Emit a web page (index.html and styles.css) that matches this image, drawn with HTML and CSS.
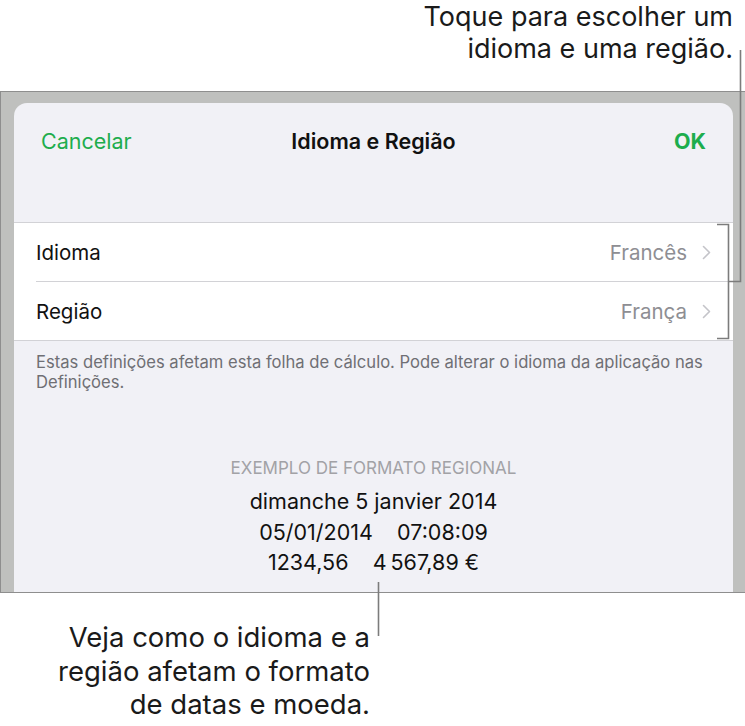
FILE: index.html
```html
<!DOCTYPE html>
<html lang="pt">
<head>
    <meta charset="UTF-8">
    <meta name="viewport" content="width=device-width, initial-scale=1.0">
    <title>Idioma e Região</title>
    <link rel="stylesheet" href="styles.css">
</head>
<body>
    <div class="page">
        <div class="note note-top">Toque para escolher um<br>idioma e uma região.</div>

        <div class="frame">
            <div class="sheet">
                <div class="nav">
                    <span class="nav-btn">Cancelar</span>
                    <span class="nav-title">Idioma e Região</span>
                    <span class="nav-btn nav-done">OK</span>
                </div>

                <div class="group">
                    <div class="row">
                        <span class="row-label">Idioma</span>
                        <span class="row-value">Francês</span>
                        <span class="chevron">
                            <svg width="9" height="15" viewBox="0 0 9 15"><path d="M1.5 1.5 L7.5 7.5 L1.5 13.5" fill="none" stroke="#c4c4c9" stroke-width="1.6" stroke-linecap="round" stroke-linejoin="round"/></svg>
                        </span>
                    </div>
                    <div class="row">
                        <span class="row-label">Região</span>
                        <span class="row-value">França</span>
                        <span class="chevron">
                            <svg width="9" height="15" viewBox="0 0 9 15"><path d="M1.5 1.5 L7.5 7.5 L1.5 13.5" fill="none" stroke="#c4c4c9" stroke-width="1.6" stroke-linecap="round" stroke-linejoin="round"/></svg>
                        </span>
                    </div>
                </div>

                <p class="footnote">Estas definições afetam esta folha de cálculo. Pode alterar o idioma da aplicação nas Definições.</p>

                <div class="sample">
                    <div class="sample-title">EXEMPLO DE FORMATO REGIONAL</div>
                    <div class="sample-line">dimanche 5 janvier 2014</div>
                    <div class="sample-line">05/01/2014&nbsp;&nbsp;&nbsp;&nbsp;07:08:09</div>
                    <div class="sample-line">1234,56&nbsp;&nbsp;&nbsp;&nbsp;4&#8239;567,89&nbsp;€</div>
                </div>
            </div>
        </div>

        <div class="note note-bottom">Veja como o idioma e a<br>região afetam o formato<br>de datas e moeda.</div>

        <!-- linhas das legendas -->
        <svg class="leaders" width="745" height="726" viewBox="0 0 745 726">
            <path d="M740.5 50 V281.5 H728.5" fill="none" stroke="#7c7c7c" stroke-width="1.6"/>
            <path d="M717 224.5 H728.5 V338.5 H717" fill="none" stroke="#7c7c7c" stroke-width="1.6"/>
            <path d="M378.5 582 V636" fill="none" stroke="#7c7c7c" stroke-width="1.6"/>
        </svg>
    </div>
</body>
</html>
```

FILE: styles.css
```css
body {
    margin: 0;
    padding: 0;
    background-color: #ffffff;
    font-family: Inter, Roboto, "Liberation Sans", sans-serif;
    color: #111111;
}

.page {
    position: relative;
    width: 745px;
    height: 726px;
    overflow: hidden;
}

.note {
    font-size: 27px;
    color: #1a1a1a;
    text-align: right;
}

.note-top {
    line-height: 32px;
    padding: 1px 12px 0 0;
    height: 87px;
    box-sizing: border-box;
}

.frame {
    height: 502px;
    box-sizing: border-box;
    margin-top: 4px;
    padding: 11px 12px 0 13px;
    background-color: #bfc0be;
    border-top: 1.5px solid #8e8e8e;
    border-bottom: 1.5px solid #8e8e8e;
    border-left: 1.5px solid #8e8e8e;
}

.sheet {
    height: 100%;
    background-color: #f1f1f6;
    border-radius: 13px 13px 0 0;
    overflow: hidden;
}

.nav {
    display: flex;
    align-items: center;
    justify-content: space-between;
    height: 76px;
    padding: 0 27px 0 27px;
    margin-bottom: 43px;
    font-size: 21.5px;
}

.nav-btn {
    color: #1dad4d;
    min-width: 100px;
}

.nav-done {
    text-align: right;
    font-weight: 700;
}

.nav-title {
    font-weight: 600;
    color: #111111;
}

.group {
    background-color: #ffffff;
    border-top: 1px solid #d2d2d6;
    border-bottom: 1px solid #d2d2d6;
}

.row {
    display: flex;
    align-items: center;
    height: 58px;
    margin-left: 22px;
    padding-right: 22px;
    font-size: 20.5px;
}

.row + .row {
    border-top: 1px solid #d2d2d6;
}

.row-label {
    flex: 1;
    padding-top: 1px;
}

.row-value {
    color: #8e8e93;
    margin-right: 15px;
    padding-top: 1px;
}

.chevron {
    display: flex;
    align-items: center;
}

.footnote {
    margin: 0;
    padding: 11px 22px 0 22px;
    font-size: 16.6px;
    line-height: 20px;
    color: #6f6f74;
}

.sample {
    text-align: center;
    padding-top: 66px;
}

.sample-title {
    font-size: 17px;
    color: #a2a2a6;
    line-height: 20px;
    margin-bottom: 8px;
}

.sample-line {
    font-size: 21.5px;
    line-height: 30.5px;
    color: #111111;
}

.note-bottom {
    font-size: 27.5px;
    line-height: 33.5px;
    width: 370px;
    padding-top: 28px;
}

.leaders {
    position: absolute;
    top: 0;
    left: 0;
}
```
